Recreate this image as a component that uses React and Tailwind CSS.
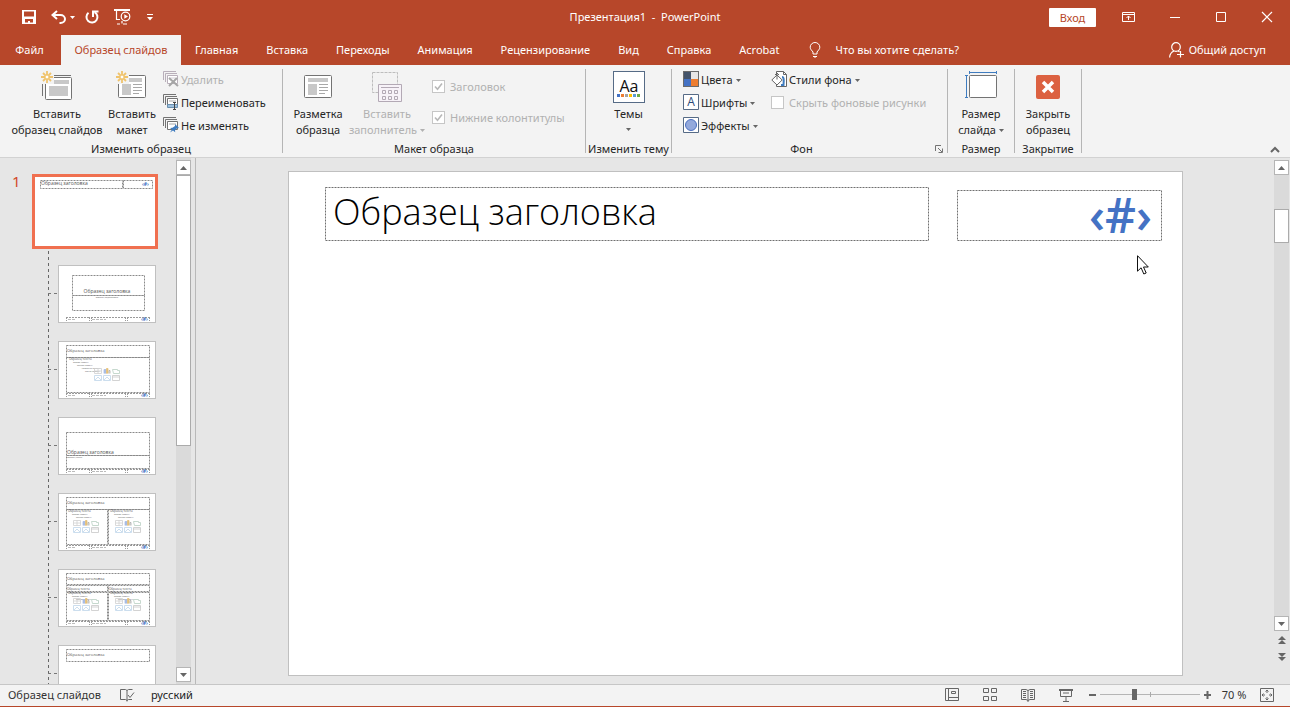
import React from 'react';
import clsx from 'clsx';

const tabs = [
  'Главная',
  'Вставка',
  'Переходы',
  'Анимация',
  'Рецензирование',
  'Вид',
  'Справка',
  'Acrobat',
];

const Caret = ({ className }) => (
  <svg viewBox="0 0 5 3" className={clsx('inline-block h-[3px] w-[5px] shrink-0 fill-current', className)}>
    <path d="M0 0h5L2.5 3z" />
  </svg>
);

/* ---------- title bar ---------- */

const SaveIcon = () => (
  <svg width="14" height="14" viewBox="0 0 14 14" fill="#fff" fillRule="evenodd">
    <path d="M0 0h14v14H0zM2 1.500v5h10v-5zM3 9v3.500h3V11h2v1.500h3V9z" />
  </svg>
);

const UndoIcon = () => (
  <svg width="16" height="14" viewBox="0 0 16 14" fill="none" stroke="#fff" strokeWidth="2">
    <path d="M6 1 1.500 5 6 9M2 5h7.500a4.500 4 0 0 1 0 8H8.500" />
  </svg>
);

const RepeatIcon = () => (
  <svg width="14" height="14" viewBox="0 0 14 14" fill="none" stroke="#fff" strokeWidth="2">
    <path d="M9.500 2.200A5.500 5.500 0 1 1 3.500 2.800" />
    <path d="M8 7V1.500h5.500" />
  </svg>
);

const PresentIcon = () => (
  <svg width="17" height="16" viewBox="0 0 17 16" fill="none" stroke="#fff" strokeWidth="1.200">
    <path d="M0 1h16" strokeWidth="2" />
    <path d="M2.500 1v9.500H6M8 12v2.500M3 15h3M9 15h4" />
    <circle cx="11.500" cy="7.500" r="4.300" />
    <path d="M10.300 5.200 14 7.500l-3.700 2.300z" fill="#fff" stroke="none" />
  </svg>
);

const WindowButton = ({ label, children }) => (
  <button aria-label={label} className="flex h-8 w-[46px] items-center justify-center">
    <svg width="14" height="12" viewBox="0 0 14 12" fill="none" stroke="#fff">
      {children}
    </svg>
  </button>
);

const TitleBar = () => (
  <header className="grid h-[35px] shrink-0 grid-cols-[1fr_auto_1fr] items-center pb-px">
    <div className="flex items-center pl-[22px]">
      <button aria-label="Сохранить"><SaveIcon /></button>
      <button aria-label="Отменить" className="ml-[15px] flex items-center gap-[3px]">
        <UndoIcon />
        <Caret />
      </button>
      <button aria-label="Повторить" className="ml-[10px]"><RepeatIcon /></button>
      <button aria-label="Начать показ" className="ml-[15px]"><PresentIcon /></button>
      <button aria-label="Настройка панели" className="ml-4">
        <svg width="6" height="7" viewBox="0 0 6 7" fill="#fff">
          <path d="M0 0h6v1H0zM0 3h6L3 6.500z" />
        </svg>
      </button>
    </div>
    <h1 className="whitespace-pre">Презентация1  -  PowerPoint</h1>
    <div className="flex items-center justify-end">
      <button className="mr-[10px] h-[19px] w-[47px] rounded-[1px] bg-white leading-[19px] text-[#b7472a]">Вход</button>
      <WindowButton label="Параметры ленты">
        <path d="M.5 1.500h12v9H.5zM.5 3.500h12M6.500 9V5M4.500 7l2-2 2 2" />
      </WindowButton>
      <WindowButton label="Свернуть">
        <path d="M2 6.500h10" />
      </WindowButton>
      <WindowButton label="Развернуть">
        <path d="M2.500 1.500h9v9h-9z" />
      </WindowButton>
      <WindowButton label="Закрыть">
        <path d="m2 1 10 10M12 1 2 11" strokeWidth="1.200" />
      </WindowButton>
    </div>
  </header>
);

const TabBar = () => (
  <nav className="flex h-[30px] shrink-0 items-stretch">
    <button className="w-[61px] pr-[2px]">Файл</button>
    <button className="w-[120px] bg-[#f3f3f3] text-[#b7472a]">Образец слайдов</button>
    {tabs.map((tab) => (
      <button key={tab} className="px-[14px]">{tab}</button>
    ))}
    <label className="ml-4 flex items-center gap-[14px]" htmlFor="tell-me">
      <svg width="12" height="16" viewBox="0 0 12 16" fill="none" stroke="#fff">
        <path d="M4 12v-2C3 8.500 1.200 7.500 1.200 5.200a4.800 4.700 0 0 1 9.600 0C10.800 7.500 9 8.500 8 10v2zM4 14.500h4M5 16h2" />
      </svg>
      <input
        id="tell-me"
        placeholder="Что вы хотите сделать?"
        className="w-[150px] outline-none placeholder:text-white"
      />
    </label>
    <button className="mr-6 ml-auto flex items-center gap-[5px]">
      <svg width="15" height="16" viewBox="0 0 15 16" fill="none" stroke="#fff" strokeWidth="1.200">
        <circle cx="7" cy="5" r="4.300" />
        <path d="M.6 15.500C.8 12 2.500 10 5 9M9 9l1.500.8M11.500 9v6.500M8 12.500h7" />
      </svg>
      Общий доступ
    </button>
  </nav>
);

/* ---------- ribbon icons ---------- */

const Spark = () => (
  <g stroke="#efc36c" strokeWidth="1.800">
    <path d="M6 0v12M0 6h12M2 2l8 8M10 2l-8 8" />
    <circle cx="6" cy="6" r="2" fill="#fff" stroke="#efc36c" strokeWidth="1" />
  </g>
);

const InsertMasterIcon = () => (
  <svg width="32" height="32" viewBox="0 0 32 32" fill="none" stroke="#737373">
    <path d="M1.500 13v12M13 4.500h17" />
    <rect x="4.500" y="6.500" width="26" height="22" rx="1" fill="#fff" />
    <path d="M11 9h17v4H11zM8 15h19v10H8z" fill="#c8c8c8" stroke="none" />
    <path d="M0 0h13v13H0z" fill="#f3f3f3" stroke="none" />
    <Spark />
  </svg>
);

const SlideShape = ({ x }) => (
  <g transform={`translate(${x} 4)`}>
    <rect x=".5" y=".5" width="27" height="22" rx="1" fill="#fff" stroke="#737373" />
    <path d="M4 3h20v4H4zM4 9h9v11H4z" fill="#c8c8c8" />
    <path d="M15 9.500h9M15 12.500h9M15 15.500h9M15 18.500h6" stroke="#a8a8a8" />
  </g>
);

const InsertLayoutIcon = () => (
  <svg width="32" height="32" viewBox="0 0 32 32">
    <SlideShape x={2} />
    <path d="M0 0h13v13H0z" fill="#f3f3f3" />
    <Spark />
  </svg>
);

const MasterLayoutIcon = () => (
  <svg width="32" height="32" viewBox="0 0 32 32">
    <SlideShape x={2} />
  </svg>
);

const PlaceholderIcon = () => (
  <svg width="32" height="32" viewBox="0 0 32 32" fill="none" stroke="#b3a9b5">
    <path d="M1.500 1.500h25v20h-25z" stroke="#bdbdbd" strokeDasharray="3 1" />
    <path d="M7.500 13.500h23v17h-23z" fill="#f7f2f8" />
    <path d="M10 16.500h18" />
    <path d="M11.500 19.500h3v3h-3zM17.500 19.500h3v3h-3zM23.500 19.500h3v3h-3zM11.500 25.500h3v3h-3zM17.500 25.500h3v3h-3zM23.500 25.500h3v3h-3z" />
  </svg>
);

const ThemesIcon = () => (
  <svg width="32" height="32" viewBox="0 0 32 32">
    <rect x=".5" y=".5" width="31" height="31" fill="#fff" stroke="#566b86" />
    <text x="16" y="21" textAnchor="middle" fontSize="16" fill="#111" className="font-['Open_Sans']">Aa</text>
    <path d="M4 23h3v3H4z" fill="#4472c4" />
    <path d="M8 23h3v3H8z" fill="#ed7d31" />
    <path d="M12 23h3v3h-3z" fill="#a5a5a5" />
    <path d="M16 23h3v3h-3z" fill="#ffc000" />
    <path d="M20 23h3v3h-3z" fill="#5b9bd5" />
    <path d="M24 23h3v3h-3z" fill="#70ad47" />
  </svg>
);

const SlideSizeIcon = () => (
  <svg width="32" height="32" viewBox="0 0 32 32" fill="none">
    <path d="M4 1.500h27M4.500 0v3M31.500 0v3M1.500 4v23M0 4.500h3M0 26.500h3" stroke="#3f7cbf" />
    <rect x="4.500" y="4.500" width="27" height="22" rx="1" fill="#fff" stroke="#737373" />
  </svg>
);

const CloseMasterIcon = () => (
  <svg width="32" height="32" viewBox="0 0 32 32">
    <rect x="4" y="4" width="24" height="24" rx="2" fill="#dc6141" />
    <path d="m11 11 10 10M21 11 11 21" stroke="#fff" strokeWidth="3.500" />
  </svg>
);

const SlidesGlyph = ({ color = '#737373' }) => (
  <g fill="none" stroke={color}>
    <path d="M.5 9V.5H13M2.500 11V2.500H14" />
    <path d="M4.500 4.500h10v8h-10z" fill="#fff" />
    <path d="M6 7h7" strokeWidth="1" opacity=".6" />
  </g>
);

const DeleteIcon = () => (
  <svg width="16" height="16" viewBox="0 0 16 16">
    <SlidesGlyph color="#b9afba" />
    <path d="m6 7 9 8M14 7l-8 8" stroke="#a6a6a6" strokeWidth="2" />
  </svg>
);

const RenameIcon = () => (
  <svg width="16" height="16" viewBox="0 0 16 16">
    <SlidesGlyph />
    <path d="M4.500 10.500h10v3h-10z" fill="#9dc0de" stroke="#6a8fae" />
    <path d="M11.500 9v7M10 8.500h3M10 15.500h3" stroke="#444" />
  </svg>
);

const PreserveIcon = () => (
  <svg width="16" height="16" viewBox="0 0 16 16">
    <SlidesGlyph />
    <path d="m12 7 4 4-2 .3-2 2 .2 2L10 13.600 7 15.500l2-3L7 11l2.500-.2L12 9z" fill="#3f7cbf" />
  </svg>
);

const ColorsIcon = () => (
  <svg width="16" height="16" viewBox="0 0 16 16">
    <path d="M0 0h16v16H0z" fill="#6b6b6b" />
    <path d="M1 1h7v7H1z" fill="#44546a" />
    <path d="M8 1h7v7H8z" fill="#e7e6e6" />
    <path d="M1 8h7v7H1z" fill="#4472c4" />
    <path d="M8 8h7v7H8z" fill="#ed7d31" />
  </svg>
);

const FontsIcon = () => (
  <svg width="16" height="16" viewBox="0 0 16 16">
    <path d="M.5.5h15v15H.5z" fill="#fff" stroke="#566b86" />
    <text x="8" y="12" textAnchor="middle" fontSize="12" fill="#2b4a78" className="font-['Open_Sans']">A</text>
  </svg>
);

const EffectsIcon = () => (
  <svg width="16" height="16" viewBox="0 0 16 16">
    <path d="M.5.5h15v15H.5z" fill="#fff" stroke="#566b86" />
    <circle cx="8" cy="8" r="5.500" fill="#93a9dc" stroke="#4a6fc0" />
  </svg>
);

const BackgroundIcon = () => (
  <svg width="16" height="16" viewBox="0 0 16 16" fill="none" stroke="#666">
    <path d="M5.500.5h7l3 3v12h-10z" fill="#fff" />
    <path d="M12.500.5v3h3" />
    <path d="M11 6c2 0 2 3 1.500 8H10" stroke="#3f7cbf" strokeWidth="2" />
    <path d="M6 4 .8 9 6 14l5.200-5z" fill="#fff" />
    <path d="M6 8.500v-6M4 4l2-2 2 2" />
  </svg>
);

/* ---------- ribbon ---------- */

const Group = ({ title, width, launcher, children }) => (
  <section className={clsx('flex shrink-0 flex-col', width)}>
    <div className="mt-[3px] flex h-[73px]">{children}</div>
    <div className="flex h-4 items-center">
      <h2 className="flex-1 text-center leading-4 whitespace-nowrap">{title}</h2>
      {launcher && (
        <button aria-label="Параметры" className="w-4 pl-1">
          <svg width="8" height="8" viewBox="0 0 8 8" fill="none" stroke="#737373">
            <path d="M.5 6V.5H6M3 3l4 4M7.500 3.500v4h-4" />
          </svg>
        </button>
      )}
    </div>
  </section>
);

const Divider = () => <div className="my-1 w-px shrink-0 bg-[#b5b5b5]" />;

const BigButton = ({ icon, lines, caret, disabled, className }) => (
  <button
    disabled={disabled}
    className={clsx('flex flex-col items-center pt-[3px] leading-4 whitespace-nowrap disabled:text-[#b1b1b1]', className)}
  >
    <span className="h-[35px]">{icon}</span>
    <span>{lines[0]}</span>
    <span className="flex h-4 items-center gap-[3px]">
      {lines[1]}
      {caret && <Caret className={disabled ? 'text-[#b1b1b1]' : 'text-[#666]'} />}
    </span>
  </button>
);

const SmallButton = ({ icon, label, caret, disabled }) => (
  <button
    disabled={disabled}
    className="mb-px flex h-[22px] items-center gap-[2px] whitespace-nowrap disabled:text-[#b1b1b1]"
  >
    {icon}
    <span className="flex items-center gap-[3px] pt-[2px]">
      {label}
      {caret && <Caret className="text-[#666]" />}
    </span>
  </button>
);

const CheckOption = ({ id, label, checked }) => (
  <div className="flex h-[23px] items-center gap-[5px] whitespace-nowrap text-[#b1b1b1]">
    <span className="relative h-[13px] w-[13px]">
      <input
        id={id}
        type="checkbox"
        defaultChecked={checked}
        disabled
        className="block h-[13px] w-[13px] appearance-none border border-[#c6c6c6] bg-white"
      />
      {checked && (
        <svg viewBox="0 0 13 13" className="absolute inset-0" fill="none" stroke="#b8b8b8" strokeWidth="1.600">
          <path d="m3 6.500 2.500 2.800L10 3.500" />
        </svg>
      )}
    </span>
    <label htmlFor={id}>{label}</label>
  </div>
);

const Ribbon = () => (
  <div className="flex h-[93px] shrink-0 border-b border-[#d2d2d2] bg-[#f3f3f3] text-[#262626]">
    <Group title="Изменить образец" width="w-[282px]">
      <BigButton icon={<InsertMasterIcon />} lines={['Вставить', 'образец слайдов']} className="ml-[6px] w-[102px]" />
      <BigButton icon={<InsertLayoutIcon />} lines={['Вставить', 'макет']} className="w-12" />
      <div className="ml-[7px]">
        <SmallButton icon={<DeleteIcon />} label="Удалить" disabled />
        <SmallButton icon={<RenameIcon />} label="Переименовать" />
        <SmallButton icon={<PreserveIcon />} label="Не изменять" />
      </div>
    </Group>
    <Divider />
    <Group title="Макет образца" width="w-[302px]">
      <BigButton icon={<MasterLayoutIcon />} lines={['Разметка', 'образца']} className="ml-2 w-[54px]" />
      <BigButton icon={<PlaceholderIcon />} lines={['Вставить', 'заполнитель']} caret disabled className="ml-px w-[82px]" />
      <div className="ml-1 flex flex-col gap-2 pt-[7px]">
        <CheckOption id="opt-title" label="Заголовок" checked />
        <CheckOption id="opt-footers" label="Нижние колонтитулы" checked />
      </div>
    </Group>
    <Divider />
    <Group title="Изменить тему" width="w-[85px]">
      <button className="flex flex-1 flex-col items-center pt-[3px] leading-4">
        <span className="h-[35px]"><ThemesIcon /></span>
        <span>Темы</span>
        <Caret className="mt-[6px] text-[#666]" />
      </button>
    </Group>
    <Divider />
    <Group title="Фон" width="w-[275px]" launcher>
      <div className="ml-[11px] w-[88px]">
        <SmallButton icon={<ColorsIcon />} label="Цвета" caret />
        <SmallButton icon={<FontsIcon />} label="Шрифты" caret />
        <SmallButton icon={<EffectsIcon />} label="Эффекты" caret />
      </div>
      <div>
        <SmallButton icon={<BackgroundIcon />} label="Стили фона" caret />
        <CheckOption id="opt-hide" label="Скрыть фоновые рисунки" />
      </div>
    </Group>
    <Divider />
    <Group title="Размер" width="w-[66px]">
      <BigButton icon={<SlideSizeIcon />} lines={['Размер', 'слайда']} caret className="flex-1" />
    </Group>
    <Divider />
    <Group title="Закрытие" width="w-[66px]">
      <BigButton icon={<CloseMasterIcon />} lines={['Закрыть', 'образец']} className="flex-1" />
    </Group>
    <Divider />
    <button aria-label="Свернуть ленту" className="mr-[10px] mb-1 ml-auto self-end">
      <svg width="10" height="7" viewBox="0 0 10 7" fill="none" stroke="#666" strokeWidth="2">
        <path d="m1 6 4-4 4 4" />
      </svg>
    </button>
  </div>
);

/* ---------- thumbnails ---------- */

const Dash = ({ x, y, w, h }) => (
  <rect x={x + 0.5} y={y + 0.5} width={w} height={h} fill="none" stroke="#8a8a8a" strokeDasharray="2 1" />
);

const Tiny = ({ x, y, size = 4, children, anchor }) => (
  <text x={x} y={y} fontSize={size} textAnchor={anchor} fill="#555">{children}</text>
);

const Footer = () => (
  <g>
    <path d="M8 52.500h23M33 52.500h34M69 52.500h23M8.500 52v4M31.500 52v4M33.500 52v4M67.500 52v4M69.500 52v4M91.500 52v4" stroke="#9a9a9a" strokeDasharray="2 1" />
    <path d="M10 54.500h7M34 54.500h14" stroke="#bbb" strokeDasharray="3 1" />
    <text x="83" y="56" fontSize="5" fontWeight="700" fill="#4472c4">‹#›</text>
  </g>
);

const Levels = ({ x, y, count = 5 }) => (
  <g>
    {['Образец текста', 'Второй уровень', 'Третий уровень', 'Четвертый уровень', 'Пятый уровень']
      .slice(0, count)
      .map((level, i) => (
        <Tiny key={level} x={x + i * 4} y={y + i * 3} size={i === 0 ? 3 : 2}>{level}</Tiny>
      ))}
  </g>
);

const ContentIcons = ({ x, y }) => (
  <g transform={`translate(${x} ${y})`} fill="none" strokeWidth=".8">
    <path d="M.5.5h7v5h-7zM.5 3h7M4 .5v5" stroke="#d0d0d0" />
    <path d="M10 5.500v-4h2v4" fill="#a8bde4" stroke="#a8bde4" />
    <path d="M12.500 5.500v-5h1.500v5" fill="#e5c078" stroke="#e5c078" />
    <path d="M15 5.500v-3h1v3" stroke="#aaa" />
    <path d="M18.500 1.500h5v1h2v3h-6z" stroke="#b8cfc2" />
    <path d="M.5 7.500h7v5h-7zM1 12l3-3 3 3M9.500 7.500h7v5h-7zM10 12l3-3 3 3" stroke="#bfd6ea" />
    <path d="M18.500 7.500h7v5h-7zM18.500 9h7" stroke="#c8c8c8" />
  </g>
);

const layouts = [
  {
    id: 'title',
    art: (
      <>
        <Dash x={14} y={10} w={72} h={20} />
        <Dash x={14} y={30} w={72} h={15} />
        <Tiny x={49} y={28} size={5} anchor="middle">Образец заголовка</Tiny>
        <Tiny x={49} y={33} size={2} anchor="middle">Образец подзаголовка</Tiny>
        <Footer />
      </>
    ),
  },
  {
    id: 'content',
    art: (
      <>
        <Dash x={8} y={4} w={83} h={12} />
        <Dash x={8} y={16} w={83} h={35} />
        <Tiny x={9} y={11}>Образец заголовка</Tiny>
        <Levels x={11} y={19} />
        <ContentIcons x={36} y={27} />
        <Footer />
      </>
    ),
  },
  {
    id: 'section',
    art: (
      <>
        <Dash x={8} y={15} w={83} h={23} />
        <Dash x={8} y={38} w={83} h={13} />
        <Tiny x={9} y={37} size={5}>Образец заголовка</Tiny>
        <Tiny x={9} y={41} size={2}>Образец текста</Tiny>
        <Footer />
      </>
    ),
  },
  {
    id: 'two-content',
    art: (
      <>
        <Dash x={8} y={4} w={83} h={12} />
        <Dash x={8} y={16} w={41} h={35} />
        <Dash x={50} y={16} w={41} h={35} />
        <Tiny x={9} y={11}>Образец заголовка</Tiny>
        <Levels x={10} y={19} count={3} />
        <Levels x={52} y={19} count={3} />
        <ContentIcons x={15} y={27} />
        <ContentIcons x={57} y={27} />
        <Footer />
      </>
    ),
  },
  {
    id: 'comparison',
    art: (
      <>
        <Dash x={8} y={4} w={83} h={11} />
        <Dash x={8} y={16} w={41} h={6} />
        <Dash x={50} y={16} w={41} h={6} />
        <Dash x={8} y={23} w={41} h={28} />
        <Dash x={50} y={23} w={41} h={28} />
        <Tiny x={9} y={11}>Образец заголовка</Tiny>
        <Tiny x={9} y={21} size={3}>Образец текста</Tiny>
        <Tiny x={51} y={21} size={3}>Образец текста</Tiny>
        <Levels x={10} y={25} count={3} />
        <Levels x={52} y={25} count={3} />
        <ContentIcons x={15} y={29} />
        <ContentIcons x={57} y={29} />
        <Footer />
      </>
    ),
  },
  {
    id: 'title-only',
    art: (
      <>
        <Dash x={8} y={4} w={83} h={12} />
        <Tiny x={9} y={11}>Образец заголовка</Tiny>
      </>
    ),
  },
];

const Arrow = ({ down }) => (
  <svg width="7" height="4" viewBox="0 0 7 4" fill="#666">
    <path d={down ? 'M0 0h7L3.500 4z' : 'M0 4h7L3.500 0z'} />
  </svg>
);

const ScrollButton = ({ down, label }) => (
  <button
    aria-label={label}
    className="flex h-[15px] w-[15px] shrink-0 items-center justify-center border border-[#b5b5b5] bg-white"
  >
    <Arrow down={down} />
  </button>
);

const ThumbnailPane = () => (
  <aside className="flex w-[196px] shrink-0 border-r border-[#b9b9b9]">
    <div className="flex-1 overflow-hidden pt-4">
      <div className="flex">
        <span className="w-8 pl-3 text-[15px] leading-[14px] text-[#d2492a]">1</span>
        <button aria-label="Образец слайдов 1" className="h-[75px] w-[126px] border-3 border-[#f07050] bg-white">
          <svg width="120" height="69" viewBox="0 0 120 69" className="font-['Open_Sans']">
            <Dash x={5} y={3} w={82} h={8} />
            <Dash x={88} y={3} w={29} h={8} />
            <Tiny x={6} y={8} size={5}>Образец заголовка</Tiny>
            <text x="107" y="9" fontSize="5" fontWeight="700" fill="#4472c4">‹#›</text>
          </svg>
        </button>
      </div>
      <ul className="mt-[2px] ml-12 bg-[repeating-linear-gradient(to_bottom,#666_0_3px,transparent_3px_6px)] bg-[length:1px_100%] bg-no-repeat pt-[14px]">
        {layouts.map(({ id, art }) => (
          <li key={id} className="mb-[18px] flex items-start">
            <span className="mt-7 mr-px w-[9px] border-t border-dashed border-[#777]" />
            <button aria-label="Макет" className="h-[58px] w-[98px] border border-[#c0c0c0] bg-white">
              <svg width="96" height="56" viewBox="1 1 96 56" className="font-['Open_Sans']">{art}</svg>
            </button>
          </li>
        ))}
      </ul>
    </div>
    <div className="mr-1 flex w-[15px] flex-col bg-[#dadada] pt-[2px] pb-[2px]">
      <ScrollButton label="Вверх" />
      <div className="h-[271px] shrink-0 border border-[#ababab] bg-white" />
      <div className="flex-1" />
      <ScrollButton down label="Вниз" />
    </div>
  </aside>
);

/* ---------- slide ---------- */

const Placeholder = ({ className, children }) => (
  <div className={clsx('relative', className)}>
    <svg className="absolute inset-0 h-full w-full overflow-visible" fill="none" stroke="#707070" strokeDasharray="2 1">
      <rect x=".5" y=".5" width="100%" height="100%" />
    </svg>
    {children}
  </div>
);

const DoubleArrow = ({ down, label }) => (
  <button aria-label={label} className="flex h-[17px] w-[15px] items-center justify-center">
    <svg width="8" height="8" viewBox="0 0 8 8" fill="#666" className={clsx(down && 'rotate-180')}>
      <path d="M4 0l4 4H0zM4 4l4 4H0z" />
    </svg>
  </button>
);

const SlideArea = () => (
  <main className="flex min-w-0 flex-1">
    <div className="flex flex-1 pt-[13px] pr-[91px] pb-2 pl-[92px]">
      <div className="flex flex-1 items-start border border-[#c0c0c0] bg-white pt-[15px] pr-[21px] pl-9">
        <Placeholder className="h-[53px] flex-1 pl-2">
          <p className="text-[36px] leading-[50px] font-light text-black font-['Open_Sans']">Образец заголовка</p>
        </Placeholder>
        <Placeholder className="mt-[3px] ml-[29px] h-[50px] w-[204px] pr-[9px] text-right">
          <p className="text-[48px] leading-[50px] font-semibold text-[#4472c4] font-['Open_Sans']">‹#›</p>
          <svg width="12" height="20" viewBox="0 0 12 20" className="absolute top-[65px] right-3">
            <path d="M.5.700v15.500l3.600-3.400 2.700 6.200 2.400-1-2.700-6h4.800z" fill="#fff" stroke="#111" />
          </svg>
        </Placeholder>
      </div>
    </div>
    <div className="mr-px flex w-[15px] flex-col pt-[2px] pb-[19px]">
      <ScrollButton label="Вверх" />
      <div className="flex-1 bg-[#dadada] pt-[34px]">
        <div className="h-[34px] border border-[#ababab] bg-white" />
      </div>
      <ScrollButton down label="Вниз" />
      <DoubleArrow label="Предыдущий слайд" />
      <DoubleArrow down label="Следующий слайд" />
    </div>
  </main>
);

/* ---------- status bar ---------- */

const ViewButton = ({ label, children }) => (
  <button aria-label={label}>
    <svg width="14" height="14" viewBox="0 0 14 14" fill="none" stroke="#666">{children}</svg>
  </button>
);

const StatusBar = () => (
  <footer className="flex h-[23px] shrink-0 items-center border-t border-b border-t-[#c6c6c6] border-b-[#b7472a] bg-[#f3f3f3] pr-4 pb-[2px] pl-2 text-[#333]">
    <span>Образец слайдов</span>
    <button aria-label="Правописание" className="ml-[19px]">
      <svg width="15" height="14" viewBox="0 0 15 14" fill="none" stroke="#666">
        <path d="M7 12.500 5.500 11.500h-5v-10h5L7 2.500l1.500-1h4M7 2.500v11M7 12.500l1.500-1H12M8 7l2 2.500 4-5" />
      </svg>
    </button>
    <button className="ml-4 text-[#222]">русский</button>
    <div className="ml-auto flex items-center gap-6">
      <ViewButton label="Обычный">
        <path d="M.5.5h13v12H.5zM3.500.5v12M3.500 9.500h10M6.500 3.500h4v2h-4z" />
      </ViewButton>
      <ViewButton label="Сортировщик">
        <path d="M.5.5h5v4h-5zM8.500.5h5v4h-5zM.5 8.500h5v4h-5zM8.500 8.500h5v4h-5z" />
      </ViewButton>
      <ViewButton label="Чтение">
        <path d="M7 2.500 5 1.500H.5v10H5l2 1 2-1h4.500v-10H9zM7 2v12M2 3.500h3M2 5.500h3M2 7.500h3M2 9.500h3M9 3.500h3M9 5.500h3M9 7.500h3M9 9.500h3" />
      </ViewButton>
      <ViewButton label="Показ слайдов">
        <path d="M.5 1.500h13M1.500 2v6.500h11V2M4 5h6M7 9v4M4 13.500h6" />
        <path d="M0 2h14" strokeWidth="2" />
      </ViewButton>
    </div>
    <button aria-label="Уменьшить" className="ml-4 h-[2px] w-[7px] bg-[#666]" />
    <div className="relative mx-1 flex w-[100px] items-center">
      <span className="absolute left-[50px] h-[5px] w-px bg-[#aaa]" />
      <input
        type="range"
        aria-label="Масштаб"
        min="0"
        max="100"
        defaultValue="34"
        className="h-3 w-full appearance-none bg-[linear-gradient(#b5b5b5,#b5b5b5)] bg-[length:100%_1px] bg-center bg-no-repeat [&::-webkit-slider-thumb]:h-[11px] [&::-webkit-slider-thumb]:w-[5px] [&::-webkit-slider-thumb]:appearance-none [&::-webkit-slider-thumb]:bg-[#666]"
      />
    </div>
    <button aria-label="Увеличить">
      <svg width="7" height="8" viewBox="0 0 7 8" stroke="#666" strokeWidth="2">
        <path d="M0 4h7M3.500 0v8" />
      </svg>
    </button>
    <span className="w-[49px] pr-[3px] text-center">70 %</span>
    <ViewButton label="Вписать слайд">
      <path d="M.5.5h13v13H.5z" />
      <path d="M7 2v3M7 9v3M2 7h3M9 7h3M5.500 3.500 7 2l1.500 1.500M5.500 10.500 7 12l1.500-1.500M3.500 5.500 2 7l1.500 1.500M10.500 5.500 12 7l-1.500 1.500" />
    </ViewButton>
  </footer>
);

const App = () => (
  <div className="flex h-screen flex-col overflow-hidden bg-[#b7472a] font-['Noto_Sans','Open_Sans',sans-serif] text-[11px] leading-4 text-white">
    <TitleBar />
    <TabBar />
    <Ribbon />
    <div className="flex min-h-0 flex-1 bg-[#e6e6e6]">
      <ThumbnailPane />
      <SlideArea />
    </div>
    <StatusBar />
  </div>
);

export default App;
